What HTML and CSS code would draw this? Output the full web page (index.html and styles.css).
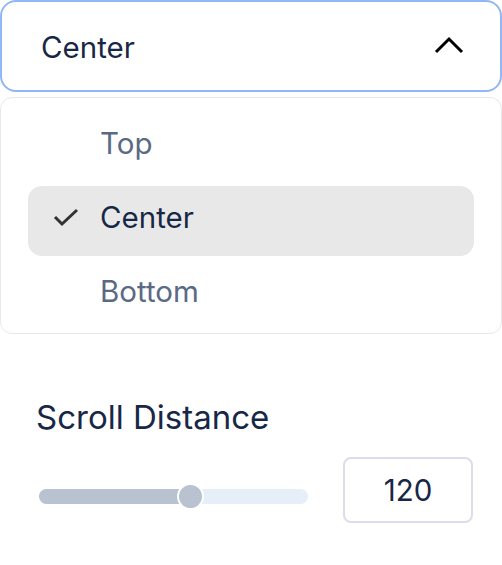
FILE: index.html
```html
<!DOCTYPE html>
<html lang="en">

<head>
    <meta charset="UTF-8">
    <meta name="viewport" content="width=device-width, initial-scale=1.0">
    <title>Position settings</title>
    <link rel="stylesheet" href="styles.css">
</head>

<body>
    <div class="panel">
        <!-- select trigger -->
        <button class="select-trigger">
            <span class="select-value">Center</span>
            <svg class="chevron" width="30" height="18" viewBox="0 0 30 18">
                <path d="M2 16 L15 3 L28 16" fill="none" stroke="#000" stroke-width="3" />
            </svg>
        </button>

        <!-- open list -->
        <ul class="select-list">
            <li class="select-item">
                <span class="check"></span>
                <span>Top</span>
            </li>
            <li class="select-item selected">
                <span class="check">
                    <svg width="26" height="20" viewBox="0 0 26 20">
                        <path d="M2 10 L9 17 L24 3" fill="none" stroke="#333" stroke-width="3" />
                    </svg>
                </span>
                <span>Center</span>
            </li>
            <li class="select-item">
                <span class="check"></span>
                <span>Bottom</span>
            </li>
        </ul>

        <!-- scroll distance -->
        <div class="field">
            <div class="field-label">Scroll Distance</div>
            <div class="field-row">
                <div class="slider">
                    <div class="slider-fill" style="width: 151px;"></div>
                    <div class="slider-thumb"></div>
                </div>
                <div class="number-box">120</div>
            </div>
        </div>
    </div>
</body>

</html>
```

FILE: styles.css
```css
body {
    margin: 0;
    padding: 0;
    font-family: Inter, "Noto Sans", Arial, sans-serif;
    background: #fff;
    color: #172846;
}

.panel {
    width: 502px;
}

/* 触发按钮 */
.select-trigger {
    display: flex;
    align-items: center;
    justify-content: space-between;
    box-sizing: border-box;
    width: 502px;
    height: 92px;
    padding: 2px 36px 0 39px;
    background: #fff;
    border: 2px solid #93b6f6;
    border-radius: 16px;
    font-family: inherit;
    font-size: 29.5px;
    color: #172846;
    cursor: pointer;
}

.chevron {
    margin-top: -4px;
}

/* 下拉列表 */
.select-list {
    list-style: none;
    box-sizing: border-box;
    height: 237px;
    margin: 5px 0 0;
    padding: 14px 27px 0;
    border: 1.5px solid #e8e8ea;
    border-radius: 12px;
    display: flex;
    flex-direction: column;
    gap: 4px;
}

.select-item {
    display: flex;
    align-items: center;
    height: 70px;
    padding-left: 25px;
    padding-bottom: 8px;
    box-sizing: border-box;
    border-radius: 14px;
    font-size: 29.5px;
    color: #5a6a84;
}

.select-item.selected {
    background: #e8e8e8;
    color: #172846;
}

.check {
    display: flex;
    width: 47px;
}

/* 滚动距离 */
.field {
    padding: 63px 29px 0 36px;
}

.field-label {
    font-size: 33px;
    line-height: 40px;
    color: #172846;
}

.field-row {
    display: flex;
    align-items: flex-start;
    justify-content: space-between;
    margin-top: 20px;
}

.slider {
    position: relative;
    width: 269px;
    height: 15px;
    margin: 32px 0 0 3px;
    border-radius: 8px;
    background: #e6eef8;
}

.slider-fill {
    height: 100%;
    border-radius: 8px;
    background: #b8c2d1;
}

.slider-thumb {
    position: absolute;
    left: 138px;
    top: -6px;
    width: 23px;
    height: 23px;
    border-radius: 50%;
    background: #b8c2d1;
    border: 2px solid #fff;
}

.number-box {
    display: flex;
    align-items: center;
    justify-content: center;
    width: 130px;
    height: 66px;
    box-sizing: border-box;
    border: 2px solid #dddceb;
    border-radius: 8px;
    font-size: 29.5px;
    color: #172846;
}
```
